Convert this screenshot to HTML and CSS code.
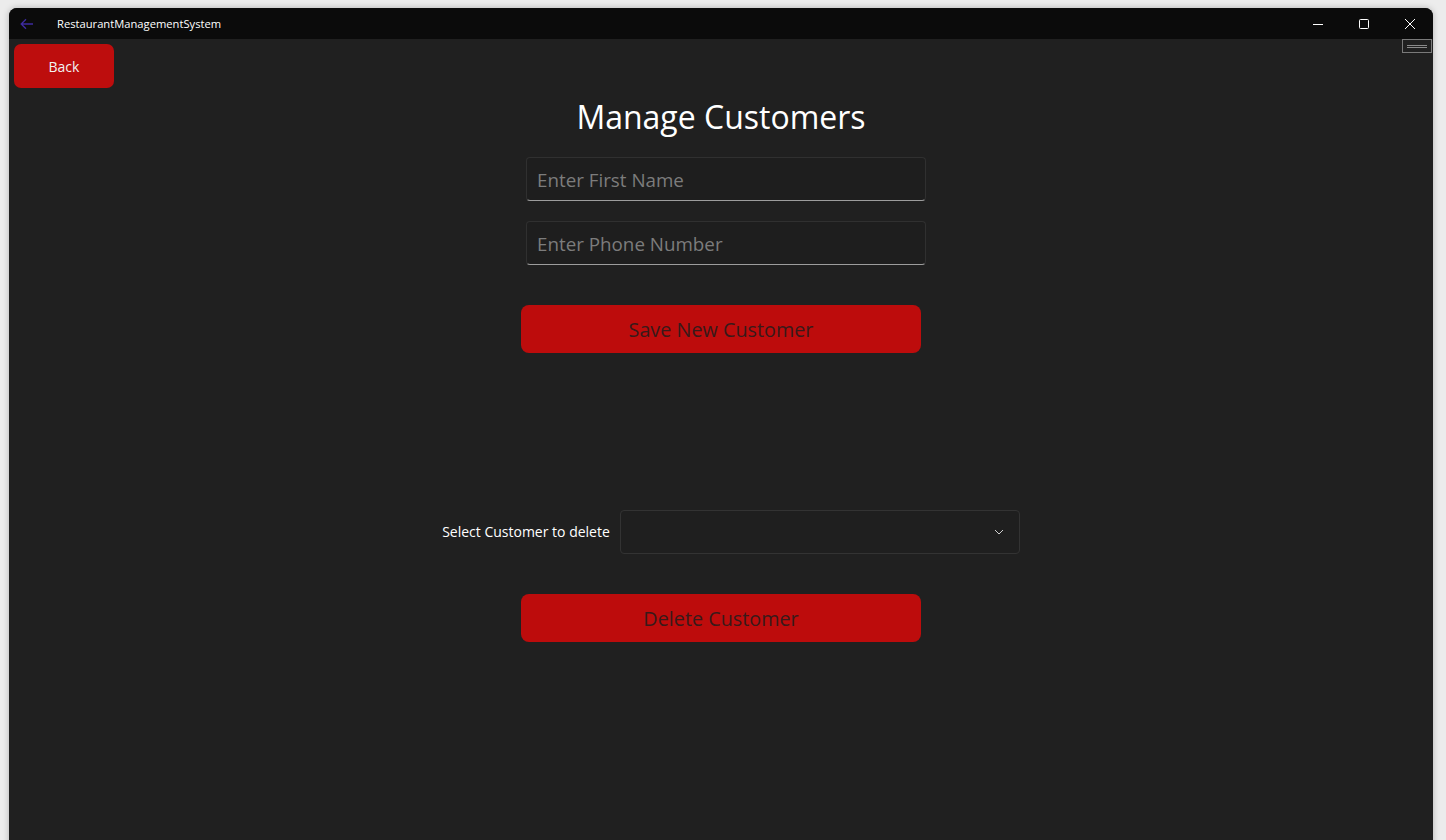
FILE: index.html
```html
<!DOCTYPE html>
<html>
<head>
<meta charset="utf-8">
<title>RestaurantManagementSystem</title>
<link rel="stylesheet" href="styles.css">
</head>
<body>
<div class="window">
  <div class="titlebar">
    <div class="tb-left">
      <svg class="tb-back" width="14" height="12" viewBox="0 0 14 12"><path d="M13 6H1.5M6 1.2L1.2 6L6 10.8" fill="none" stroke="#3e2ba0" stroke-width="1.3"/></svg>
      <span class="tb-title">RestaurantManagementSystem</span>
    </div>
    <div class="tb-controls">
      <div class="tb-btn"><svg width="12" height="12" viewBox="0 0 12 12"><path d="M1 6.5H11" stroke="#fff" stroke-width="1"/></svg></div>
      <div class="tb-btn"><svg width="12" height="12" viewBox="0 0 12 12"><rect x="1.5" y="1.5" width="9" height="9" rx="1" fill="none" stroke="#fff" stroke-width="1"/></svg></div>
      <div class="tb-btn"><svg width="12" height="12" viewBox="0 0 12 12"><path d="M1 1L11 11M11 1L1 11" stroke="#fff" stroke-width="1"/></svg></div>
    </div>
  </div>
  <div class="content">
    <button class="back-btn">Back</button>
    <div class="debug-badge"><span></span><span></span></div>
    <div class="page">
      <h1 class="title">Manage Customers</h1>
      <div class="textbox first"><span class="placeholder">Enter First Name</span></div>
      <div class="textbox second"><span class="placeholder">Enter Phone Number</span></div>
      <button class="red-btn save">Save New Customer</button>
      <div class="select-row">
        <span class="select-label">Select Customer to delete</span>
        <div class="combo">
          <svg class="chev" width="10" height="6" viewBox="0 0 10 6"><path d="M1 1L5 5L9 1" fill="none" stroke="#cfcfcf" stroke-width="1"/></svg>
        </div>
      </div>
      <button class="red-btn delete">Delete Customer</button>
    </div>
  </div>
</div>
</body>
</html>
```
FILE: styles.css
```css
html, body {
  margin: 0;
  padding: 0;
  height: 100%;
  overflow: hidden;
}
body {
  background: #ececec;
  font-family: "Open Sans", "Noto Sans", sans-serif;
}
.window {
  margin: 8px 0 0 9px;
  width: 1424px;
  height: 840px;
  border-radius: 8px 8px 0 0;
  overflow: hidden;
  background: #202020;
  box-shadow: 0 0 6px rgba(0,0,0,0.25);
  display: flex;
  flex-direction: column;
}
.titlebar {
  height: 31px;
  background: #0b0b0b;
  display: flex;
  align-items: center;
  justify-content: space-between;
  flex: none;
}
.tb-left {
  display: flex;
  align-items: center;
}
.tb-back {
  margin-left: 11px;
  margin-top: 1px;
}
.tb-title {
  margin-left: 23px;
  color: #fff;
  font-size: 11.2px;
  margin-top: 0;
}
.tb-controls {
  display: flex;
  height: 31px;
}
.tb-btn {
  width: 46px;
  display: flex;
  align-items: center;
  justify-content: center;
}
.content {
  position: relative;
  flex: 1;
}
.back-btn {
  position: absolute;
  left: 5px;
  top: 5px;
  width: 100px;
  height: 44px;
  border: none;
  border-radius: 7px;
  background: #bd0d0d;
  color: #f2f2f2;
  font-family: "Open Sans", sans-serif;
  font-size: 14px;
  padding: 0;
}
.debug-badge {
  position: absolute;
  right: 1px;
  top: 0;
  width: 28px;
  height: 12px;
  border: 1px solid #7a7a7a;
  display: flex;
  flex-direction: column;
  justify-content: center;
  align-items: center;
  gap: 1px;
}
.debug-badge span {
  display: block;
  width: 20px;
  height: 1px;
  background: #8a8a8a;
}
.page {
  display: flex;
  flex-direction: column;
  align-items: center;
  padding-top: 56px;
}
.title {
  margin: 0;
  font-weight: 400;
  font-size: 32px;
  line-height: 44px;
  color: #fff;
}
.textbox {
  box-sizing: border-box;
  width: 400px;
  height: 44px;
  border: 1px solid #303030;
  border-bottom: 1px solid #9d9d9d;
  border-radius: 4px;
  background: #1e1e1e;
  display: flex;
  align-items: center;
  padding-left: 10px;
  padding-top: 2px;
  margin-left: 10px;
}
.textbox.first { margin-top: 18px; }
.textbox.second { margin-top: 20px; }
.placeholder {
  color: #7c7c7c;
  font-size: 18.8px;
}
.red-btn {
  box-sizing: border-box;
  width: 400px;
  height: 48px;
  border: none;
  border-radius: 8px;
  background: #bd0c0c;
  color: #381a1a;
  font-family: "Open Sans", sans-serif;
  font-size: 19.8px;
  padding: 2px 0 0 0;
  line-height: 46px;
}
.save { margin-top: 40px; }
.delete { margin-top: 40px; }
.select-row {
  margin-top: 157px;
  display: flex;
  align-items: center;
  margin-left: 20px;
}
.select-label {
  color: #fff;
  font-size: 14px;
  margin-right: 10px;
  margin-bottom: 2px;
}
.combo {
  box-sizing: border-box;
  width: 400px;
  height: 44px;
  border: 1px solid #333;
  border-radius: 4px;
  background: #1f1f1f;
  display: flex;
  align-items: center;
  justify-content: flex-end;
  padding-right: 15px;
}
```
